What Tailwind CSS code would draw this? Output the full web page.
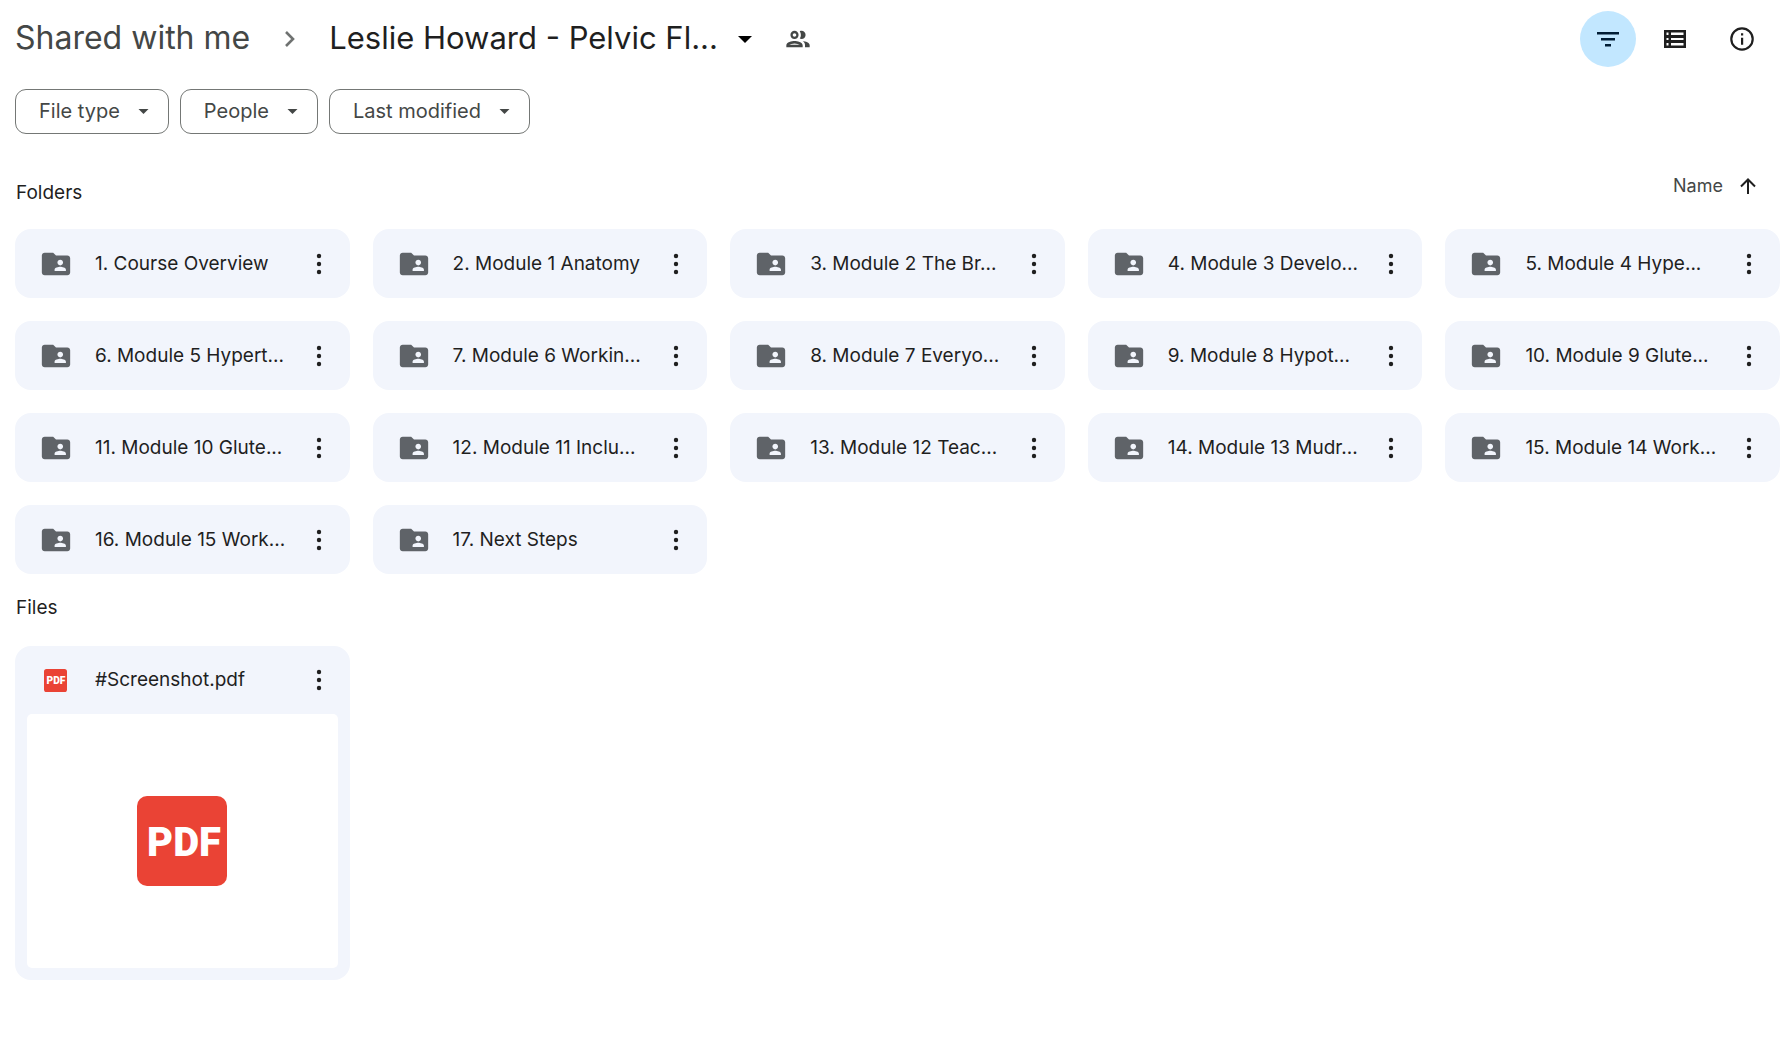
<!DOCTYPE html>
<html lang="en">
<head>
    <meta charset="UTF-8">
    <meta name="viewport" content="width=device-width, initial-scale=1.0">
    <title>Shared with me</title>
    <script src="https://cdn.jsdelivr.net/npm/@tailwindcss/browser@4"></script>
</head>
<body class="bg-white text-[#1f1f1f] font-['Inter',sans-serif] text-[19px] leading-6 pl-[15px] pr-[7px]">

    <!-- Shared icons -->
    <svg class="hidden">
        <symbol id="folder" viewBox="0 0 24 24">
            <path fill="#5f6368" d="M20 6h-8l-2-2H4c-1.1 0-2 .9-2 2v12c0 1.100.9 2 2 2h16c1.100 0 2-.9 2-2V8c0-1.100-.9-2-2-2zm-5 3c1.100 0 2 .9 2 2s-.9 2-2 2-2-.9-2-2 .9-2 2-2zm4 8h-8v-1c0-1.330 2.670-2 4-2s4 .67 4 2v1z"/>
        </symbol>
        <symbol id="more" viewBox="0 0 24 24">
            <circle cx="12" cy="4" r="2.200"/>
            <circle cx="12" cy="12" r="2.200"/>
            <circle cx="12" cy="20" r="2.200"/>
        </symbol>
        <symbol id="caret" viewBox="0 0 12 6">
            <path d="M0 0h12L6 6z"/>
        </symbol>
        <symbol id="pdf" viewBox="0 0 90 90">
            <rect width="90" height="90" rx="10" fill="#ea4335"/>
            <text x="47" y="60" text-anchor="middle" font-family="Roboto" font-weight="900" font-size="40" fill="#fff">PDF</text>
        </symbol>
    </svg>

    <!-- Breadcrumb and view controls -->
    <header class="flex items-center justify-between h-[78px] pr-[10px]">
        <nav class="flex items-center text-[32px] leading-10 whitespace-nowrap" aria-label="Breadcrumb">
            <a href="#" class="pb-[2px] text-[#444746]">Shared with me</a>
            <svg class="w-3 h-[18px] ml-[34px] mr-[33px]" viewBox="0 0 12 18" fill="none" stroke="#6f7271" stroke-width="2.600"><path d="M2 2l7 7-7 7"/></svg>
            <button class="flex items-center gap-5 text-[31px]"><span class="pb-[2px]">Leslie Howard - Pelvic Fl...</span>
                <svg class="w-[14px] h-[7px]"><use href="#caret"/></svg>
            </button>
            <button class="ml-8" aria-label="Manage access">
                <svg class="w-7 h-7" viewBox="0 0 24 24" fill="#444746"><path d="M9 13.750c-2.340 0-7 1.170-7 3.500V19h14v-1.750c0-2.330-4.660-3.500-7-3.500zM4.340 17c.84-.58 2.870-1.250 4.660-1.250s3.820.67 4.660 1.250H4.340zM9 12c1.930 0 3.500-1.570 3.500-3.500S10.930 5 9 5 5.500 6.570 5.500 8.500 7.070 12 9 12zm0-5c.83 0 1.500.67 1.500 1.500S9.830 10 9 10s-1.500-.67-1.500-1.500S8.170 7 9 7zm7.040 6.810c1.160.84 1.960 1.960 1.960 3.440V19h4v-1.750c0-2.020-3.500-3.170-5.960-3.440zM15 12c1.930 0 3.500-1.570 3.500-3.500S16.930 5 15 5c-.54 0-1.040.13-1.500.35.63.89 1 1.980 1 3.150s-.37 2.260-1 3.150c.46.22.96.35 1.500.35z"/></svg>
            </button>
        </nav>
        <div class="flex gap-[11px]">
            <button class="flex items-center justify-center size-14 rounded-full bg-[#c2e7ff]" aria-label="Filters">
                <svg class="w-[22px] h-4" viewBox="0 0 22 16" fill="#001d35"><path d="M0 1h22v2.500H0zM4 7h14v2.500H4zM8 13h6v2.500H8z"/></svg>
            </button>
            <button class="flex items-center justify-center size-14" aria-label="List layout">
                <svg class="w-[22px] h-[18px]" viewBox="0 0 22 18"><path fill="#1f1f1f" fill-rule="evenodd" d="M0 0h22v18H0zM2.500 2.600v2.300h2V2.600zM7 2.600v2.300h12.500V2.600zM2.500 7.900v2.200h2V7.900zM7 7.900v2.200h12.500V7.900zM2.500 13.100v2.300h2v-2.300zM7 13.100v2.300h12.500v-2.300z"/></svg>
            </button>
            <button class="flex items-center justify-center size-14" aria-label="View details">
                <svg class="size-6" viewBox="0 0 24 24"><circle cx="12" cy="12" r="10.700" fill="none" stroke="#1f1f1f" stroke-width="2.200"/><path fill="#1f1f1f" d="M11 6.200h2.200v2.200H11zM11 10.800h2.200v7H11z"/></svg>
            </button>
        </div>
    </header>

    <!-- Filter chips -->
    <div class="flex gap-[11px] mt-[11px] text-[20px] text-[#444746]">
        <button class="flex items-center gap-[18px] h-[45px] pl-[23px] pr-[19px] border border-[#747775] rounded-[11px]"><span class="pb-[2px]">File type</span> <svg class="w-[11px] h-[5px] fill-[#444746]"><use href="#caret"/></svg></button>
        <button class="flex items-center gap-[18px] h-[45px] pl-[23px] pr-[19px] border border-[#747775] rounded-[11px]"><span class="pb-[2px]">People</span> <svg class="w-[11px] h-[5px] fill-[#444746]"><use href="#caret"/></svg></button>
        <button class="flex items-center gap-[18px] h-[45px] pl-[23px] pr-[19px] border border-[#747775] rounded-[11px]"><span class="pb-[2px]">Last modified</span> <svg class="w-[11px] h-[5px] fill-[#444746]"><use href="#caret"/></svg></button>
    </div>

    <main>
        <div class="flex items-start justify-between mt-10 pr-6">
            <h2 class="mt-[7px] pl-px">Folders</h2>
            <button class="flex items-center gap-[17px] text-[18px] text-[#444746]">Name
                <svg class="size-4" viewBox="0 0 16 16" fill="none" stroke="#1f1f1f" stroke-width="2"><path d="M8 16V1.500M1 8.500l7-7 7 7"/></svg>
            </button>
        </div>
        <div id="folders" class="grid grid-cols-5 gap-[23px] mt-6"></div>

        <h2 class="mt-[22px] pl-px">Files</h2>
        <div class="grid grid-cols-5 gap-[23px] mt-[26px]">
            <article class="rounded-2xl bg-[#f2f5fc] px-3 pb-3">
                <div class="flex items-center h-[68px] pl-[17px] pr-[7px]">
                    <svg class="size-[23px] mr-7"><use href="#pdf"/></svg>
                    <span class="flex-1 truncate">#Screenshot.pdf</span>
                    <button aria-label="More actions"><svg class="size-6 fill-[#1f1f1f]"><use href="#more"/></svg></button>
                </div>
                <div class="flex items-center justify-center h-[254px] rounded-[5px] bg-white">
                    <svg class="size-[90px]"><use href="#pdf"/></svg>
                </div>
            </article>
        </div>
    </main>

    <script>
        const folders = [
            "1. Course Overview", "2. Module 1 Anatomy", "3. Module 2 The Br...", "4. Module 3 Develo...", "5. Module 4 Hype...",
            "6. Module 5 Hypert...", "7. Module 6 Workin...", "8. Module 7 Everyo...", "9. Module 8 Hypot...", "10. Module 9 Glute...",
            "11. Module 10 Glute...", "12. Module 11 Inclu...", "13. Module 12 Teac...", "14. Module 13 Mudr...", "15. Module 14 Work...",
            "16. Module 15 Work...", "17. Next Steps"
        ];

        document.getElementById("folders").innerHTML = folders.map(name => `
            <article class="flex items-center h-[69px] rounded-2xl bg-[#f2f5fc] pl-6 pr-[19px]">
                <svg class="size-[34px] shrink-0 mr-[22px]"><use href="#folder"/></svg>
                <span class="flex-1 whitespace-nowrap">${name}</span>
                <button aria-label="More actions"><svg class="size-6 fill-[#1f1f1f]"><use href="#more"/></svg></button>
            </article>
        `).join("");
    </script>
</body>
</html>
